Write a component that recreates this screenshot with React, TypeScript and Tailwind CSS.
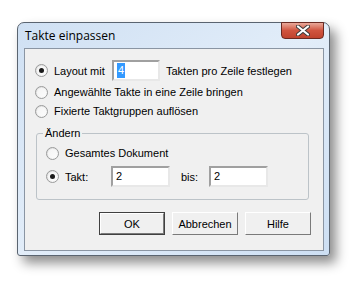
import React from "react";

function Radio({ checked }: { checked?: boolean }) {
  return (
    <span className="relative flex h-[13px] w-[13px] shrink-0 items-center justify-center rounded-full border border-[#9a9b9b] bg-gradient-to-br from-[#dcdcdc] to-white">
      <span className="flex h-[9px] w-[9px] items-center justify-center rounded-full bg-gradient-to-br from-[#f4f4f4] to-[#fcfcfc]">
        {checked && <span className="h-[5px] w-[5px] rounded-full bg-[#1a1a1a]" />}
      </span>
    </span>
  );
}

function Field({ value, selected, w }: { value: string; selected?: boolean; w: string }) {
  return (
    <div
      className={`${w} flex h-[21px] shrink-0 items-center border-2 border-t-[#a0a0a0] border-l-[#a0a0a0] border-b-[#e8e8e8] border-r-[#e8e8e8] bg-white pl-[3px]`}
    >
      {selected ? (
        <span className="bg-[#3399ff] px-[1px] leading-[15px] text-white">{value}</span>
      ) : (
        <span className="leading-[15px]">{value}</span>
      )}
    </div>
  );
}

function Btn({ label, def }: { label: string; def?: boolean }) {
  return (
    <div className={`h-[23px] w-[66px] ${def ? "border border-[#404040]" : ""}`}>
      <div className="flex h-full w-full items-center justify-center border border-t-white border-l-white border-b-[#7a7a7a] border-r-[#7a7a7a] bg-[#f0f0f0]">
        {label}
      </div>
    </div>
  );
}

export default function App() {
  return (
    <div
      className="h-[287px] w-[358px] bg-white pl-[17px] pt-[22px] text-[11px] leading-[16px] text-black"
      style={{ fontFamily: '"Liberation Sans", Arial, sans-serif' }}
    >
      <div className="flex h-[234px] w-[313px] flex-col rounded-t-[7px] rounded-b-[3px] border border-[#5a6470] bg-gradient-to-br from-[#cfe0f3] via-[#e2edf9] to-[#cddff3] shadow-[6px_7px_12px_rgba(0,0,0,0.45)]">
        {/* title bar */}
        <div className="relative flex h-[25px] items-center pl-[7px]">
          <span className="text-[12px] text-black" style={{ fontFamily: '"Open Sans", "Liberation Sans", sans-serif' }}>
            Takte einpassen
          </span>
          <div className="absolute right-[5px] top-[-1px] flex h-[17px] w-[43px] items-center justify-center rounded-b-[4px] border border-[#6b2a22] bg-gradient-to-b from-[#e8a89a] via-[#d0543f] to-[#c0432e]">
            <svg width="14" height="11" viewBox="0 0 14 11">
              <path d="M2 1.5 L12 9.5 M12 1.5 L2 9.5" stroke="#3a3a3a" strokeWidth="4" strokeLinecap="round" />
              <path d="M2 1.5 L12 9.5 M12 1.5 L2 9.5" stroke="#fff" strokeWidth="2.2" strokeLinecap="round" />
            </svg>
          </div>
        </div>
        {/* client */}
        <div className="ml-[6px] mr-[5px] flex h-[203px] flex-col border border-[#8a95a3] bg-[#f0f0f0]">
          <div className="mt-[11px] flex items-center pl-[10px]">
            <Radio checked />
            <span className="ml-[6px] w-[58px]">Layout mit</span>
            <Field value="4" selected w="w-[48px]" />
            <span className="ml-[6px]">Takten pro Zeile festlegen</span>
          </div>
          <div className="mt-[3px] flex items-center pl-[10px]">
            <Radio />
            <span className="ml-[6px]">Angewählte Takte in eine Zeile bringen</span>
          </div>
          <div className="mt-[3px] flex items-center pl-[10px]">
            <Radio />
            <span className="ml-[6px]">Fixierte Taktgruppen auflösen</span>
          </div>
          {/* group box */}
          <div className="relative ml-[11px] mt-[14px] h-[67px] w-[273px] rounded-[3px] border border-[#bcc3c8]">
            <span className="absolute left-[6px] top-[-9px] bg-[#f0f0f0] px-[2px]">Ändern</span>
            <div className="mt-[11px] flex items-center pl-[9px]">
              <Radio />
              <span className="ml-[6px]">Gesamtes Dokument</span>
            </div>
            <div className="mt-[5px] flex items-center pl-[9px]">
              <Radio checked />
              <span className="ml-[6px] w-[46px]">Takt:</span>
              <Field value="2" w="w-[59px]" />
              <span className="ml-[11px] w-[28px]">bis:</span>
              <Field value="2" w="w-[59px]" />
            </div>
          </div>
          <div className="mt-[12px] flex gap-[7px] pl-[74px]">
            <Btn label="OK" def />
            <Btn label="Abbrechen" />
            <Btn label="Hilfe" />
          </div>
        </div>
      </div>
    </div>
  );
}
